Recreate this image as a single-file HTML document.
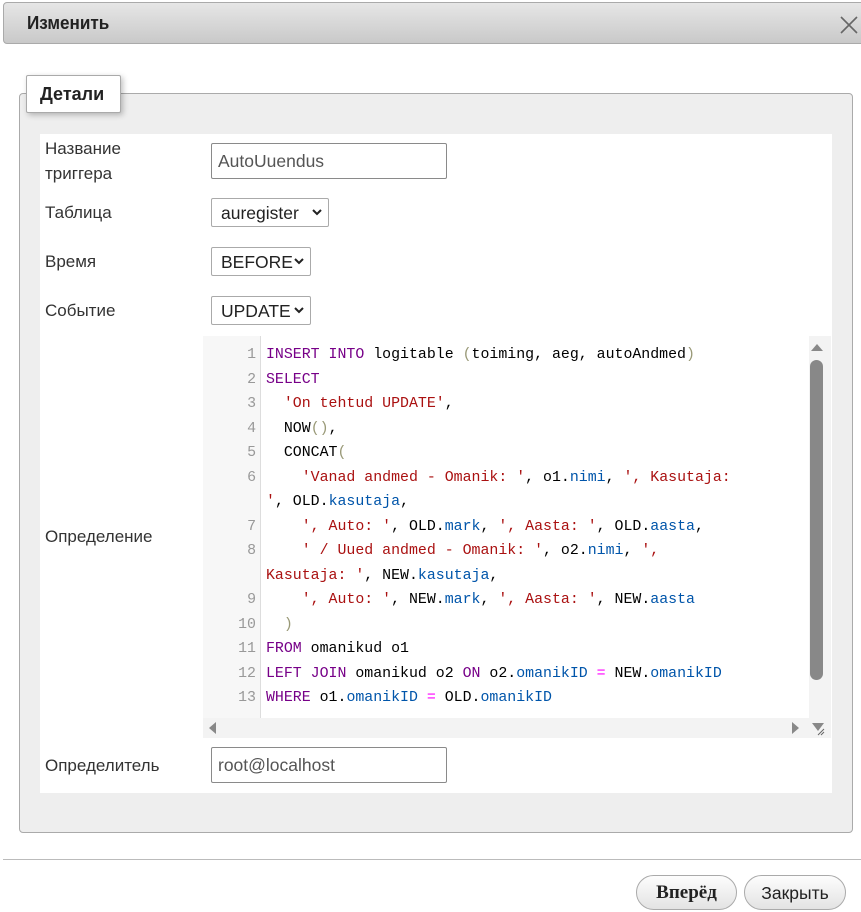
<!DOCTYPE html>
<html><head><meta charset="utf-8"><style>
*{box-sizing:border-box;margin:0;padding:0}
body{width:861px;height:912px;background:#fff;position:relative;overflow:hidden;font-family:"Liberation Sans",sans-serif;color:#333}
.a{position:absolute}
.title{left:3px;top:2px;width:870px;height:42px;border:1px solid #aaa;border-radius:4px;background:linear-gradient(#e6e6e6,#c9c9c9)}
.title span{position:absolute;left:23px;top:10px;font-weight:bold;font-size:18px;color:#222;transform:scaleX(.95);transform-origin:left}
.fs{left:19px;top:93px;width:834px;height:740px;background:#eee;border:1px solid #aaa;border-radius:4px}
.legend{left:26px;top:75px;width:95px;height:38px;background:#fff;border:1px solid #aaa;border-radius:2px;box-shadow:2px 2px 6px rgba(0,0,0,.25);font-weight:bold;font-size:18px;color:#222;padding:8px 0 0 13px}
.panel{left:40px;top:134px;width:792px;height:659px;background:#fff}
.lbl{left:45px;font-size:17px;color:#333;line-height:25px}
.inp{left:211px;width:236px;height:36px;border:1px solid #8a8a8a;border-radius:2px;font-size:17.5px;color:#555;padding:7px 0 0 6px}
.sel{left:211px;height:29px;border:1px solid #aaa;border-radius:2px;font-size:17.5px;color:#222;padding:4px 0 0 9px;white-space:nowrap}
.sel svg{position:absolute;right:6px;top:10px}
.ed{left:203px;top:336px;width:628px;height:402px;background:#fff}
.gut{left:0;top:0;width:58px;height:382px;background:#f7f7f7;border-right:1px solid #ddd}
.code{font-family:"Liberation Mono",monospace;font-size:14.9px;line-height:24.5px;white-space:pre;color:#000}
.ln{left:0;top:7px;width:53px;text-align:right;color:#999}
.src{left:63px;top:7px}
.k{color:#708}.s{color:#a11}.p{color:#997}.v{color:#05a}.o{color:#f0f}
.btn{top:875px;height:35px;border:1px solid #aaa;border-radius:18px;background:linear-gradient(#fdfdfd,#e3e3e3);font-size:17.5px;text-align:center;padding-top:7px;color:#222}
</style></head><body>
<div class="a title"><span>Изменить</span></div>
<svg class="a" style="left:840px;top:16px" width="18" height="18"><path d="M1 1L17 17M17 1L1 17" stroke="#666" stroke-width="1.6"/></svg>
<div class="a fs"></div>
<div class="a legend">Детали</div>
<div class="a panel"></div>
<div class="a lbl" style="top:136px">Название<br>триггера</div>
<div class="a lbl" style="top:200px">Таблица</div>
<div class="a lbl" style="top:249px">Время</div>
<div class="a lbl" style="top:298px">Событие</div>
<div class="a lbl" style="top:524px">Определение</div>
<div class="a lbl" style="top:753px">Определитель</div>
<div class="a inp" style="top:143px">AutoUuendus</div>
<div class="a sel" style="top:198px;width:118px">auregister<svg width="10" height="7"><path d="M1 1L5 5L9 1" stroke="#222" stroke-width="2" fill="none"/></svg></div>
<div class="a sel" style="top:247px;width:100px">BEFORE<svg width="10" height="7"><path d="M1 1L5 5L9 1" stroke="#222" stroke-width="2" fill="none"/></svg></div>
<div class="a sel" style="top:296px;width:100px">UPDATE<svg width="10" height="7"><path d="M1 1L5 5L9 1" stroke="#222" stroke-width="2" fill="none"/></svg></div>
<div class="a ed">
<div class="a gut"></div>
<div class="a code ln">1
2
3
4
5
6

7
8

9
10
11
12
13</div>
<div class="a code src"><span class="k">INSERT INTO</span> logitable <span class="p">(</span>toiming, aeg, autoAndmed<span class="p">)</span>
<span class="k">SELECT</span>
  <span class="s">'On tehtud UPDATE'</span>,
  NOW<span class="p">()</span>,
  CONCAT<span class="p">(</span>
    <span class="s">'Vanad andmed - Omanik: '</span>, o1.<span class="v">nimi</span>, <span class="s">', Kasutaja:</span>
<span class="s">'</span>, OLD.<span class="v">kasutaja</span>,
    <span class="s">', Auto: '</span>, OLD.<span class="v">mark</span>, <span class="s">', Aasta: '</span>, OLD.<span class="v">aasta</span>,
    <span class="s">' / Uued andmed - Omanik: '</span>, o2.<span class="v">nimi</span>, <span class="s">',</span>
<span class="s">Kasutaja: '</span>, NEW.<span class="v">kasutaja</span>,
    <span class="s">', Auto: '</span>, NEW.<span class="v">mark</span>, <span class="s">', Aasta: '</span>, NEW.<span class="v">aasta</span>
  <span class="p">)</span>
<span class="k">FROM</span> omanikud o1
<span class="k">LEFT JOIN</span> omanikud o2 <span class="k">ON</span> o2.<span class="v">omanikID</span> <span class="o">=</span> NEW.<span class="v">omanikID</span>
<span class="k">WHERE</span> o1.<span class="v">omanikID</span> <span class="o">=</span> OLD.<span class="v">omanikID</span></div>
<div class="a" style="left:606px;top:0;width:22px;height:382px;background:#f3f3f3"></div>
<div class="a" style="left:607px;top:24px;width:13px;height:320px;background:#888;border-radius:7px"></div>
<svg class="a" style="left:607px;top:6px" width="14" height="10"><path d="M1 9L7 2L13 9Z" fill="#888"/></svg>
<svg class="a" style="left:607px;top:328px" width="14" height="10"><path d="M1 1L7 8L13 1Z" fill="#888"/></svg>
<div class="a" style="left:0;top:382px;width:628px;height:20px;background:#f3f3f3"></div>
<svg class="a" style="left:4px;top:385px" width="10" height="14"><path d="M9 1L2 7L9 13Z" fill="#888"/></svg>
<svg class="a" style="left:588px;top:385px" width="10" height="14"><path d="M1 1L8 7L1 13Z" fill="#888"/></svg>
<svg class="a" style="left:608px;top:386px" width="14" height="14"><path d="M1 1L13 1L7 9Z" fill="#888"/><path d="M7 13L13 7M10 13L13 10" stroke="#666"/></svg>
</div>
<div class="a inp" style="top:747px">root@localhost</div>
<div class="a" style="left:3px;top:859px;width:858px;height:1px;background:#bbb"></div>
<div class="a btn" style="left:636px;width:101px;font-weight:bold;font-family:'Liberation Serif',serif;font-size:19px;padding-top:6px">Вперёд</div>
<div class="a btn" style="left:744px;width:102px">Закрыть</div>
</body></html>
